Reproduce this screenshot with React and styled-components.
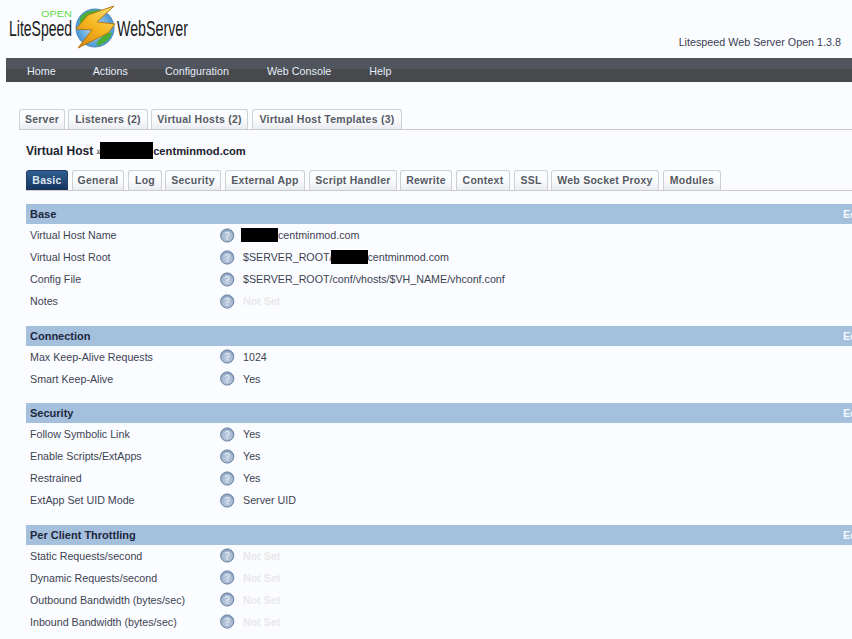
import React from 'react';
import styled, { createGlobalStyle } from 'styled-components';

const GlobalStyle = createGlobalStyle`
  html, body {
    margin: 0;
    padding: 0;
    height: 100%;
    overflow: hidden;
    background: #fbfcff;
  }
  body {
    font-family: "Liberation Sans", Arial, sans-serif;
    font-size: 10.75px;
    color: #333;
  }
`;

const Page = styled.div`
  width: 852px;
  height: 639px;
  overflow: hidden;
`;

const TopBar = styled.header`
  height: 58px;
  display: flex;
  justify-content: space-between;
  padding: 0 11px 0 6px;
`;

const Version = styled.div`
  margin-top: 36px;
  line-height: 13px;
  color: #3a4152;
`;

const Nav = styled.nav`
  margin-left: 6px;
  height: 24px;
  display: flex;
  background: linear-gradient(#50555e 0, #50555e 45%, #47494d 45%, #47494d 100%);
`;

const NavItem = styled.a`
  margin-left: ${(p) => p.$left}px;
  line-height: 26px;
  color: #e6eefa;
`;

const Tabs = styled.div`
  display: flex;
  height: 20px;
  border-bottom: 1px solid #cbcbcb;
  margin-left: ${(p) => p.$left}px;
`;

const Tab = styled.a`
  box-sizing: border-box;
  height: 20px;
  width: ${(p) => p.$w}px;
  margin-right: ${(p) => p.$gap}px;
  text-align: center;
  line-height: 18px;
  font-weight: bold;
  color: #555a63;
  letter-spacing: 0.25px;
  font-size: 10.5px;
  border: 1px solid #cfd0d2;
  border-bottom: none;
  border-radius: 3px 3px 0 0;
  background: linear-gradient(#fbfcfe 0, #fbfcfe 50%, #e9ebf2 100%);
  ${(p) =>
    p.$active &&
    `
    border-color: #1f3f68;
    color: #dfe8f4;
    background: linear-gradient(#2f5f92, #16345c);
  `}
`;

const MainTabs = styled(Tabs)`
  margin-top: 27px;
`;

const Title = styled.h1`
  margin: 12px 0 0 26px;
  height: 17px;
  font-size: 12px;
  line-height: 19px;
  font-weight: bold;
  color: #1d2330;
  display: flex;
  align-items: flex-start;
`;

const Arrow = styled.span`
  margin-left: 3px;
  width: 4px;
  font-size: 10px;
  font-weight: normal;
`;

const TitleHost = styled.span`
  font-size: 11.2px;
`;

const Redact = styled.span`
  display: inline-block;
  width: ${(p) => p.$w}px;
  height: ${(p) => p.$h}px;
  margin-left: ${(p) => p.$shift || 0}px;
  background: #000;
  flex: none;
`;

const SubTabs = styled(Tabs)`
  margin-top: 11px;
`;

const Sections = styled.div`
  margin: 13px 0 0 26px;
`;

const Section = styled.section`
  margin-bottom: 13.5px;
  &:last-child {
    margin-bottom: 0;
  }
`;

const SectionHead = styled.div`
  height: 20px;
  display: flex;
  justify-content: space-between;
  background: #a5c0dc;
  padding-left: 4px;
  line-height: 20px;
  font-weight: bold;
  font-size: 11px;
  color: #1c2740;
  overflow: hidden;
`;

const EditLink = styled.a`
  color: #f4f8ff;
  margin-right: -11px;
  width: 20px;
`;

const Row = styled.div`
  height: 22px;
  display: flex;
  align-items: center;
`;

const Label = styled.div`
  width: 194px;
  padding-left: 4px;
  box-sizing: border-box;
  color: #3c4352;
  font-size: 10.7px;
`;

const HelpWrap = styled.div`
  width: 23px;
  height: 15px;
  flex: none;
`;

const Value = styled.div`
  display: flex;
  align-items: center;
  color: ${(p) => (p.$empty ? '#e8e9ea' : '#3c4352')};
  font-weight: ${(p) => (p.$empty ? 'bold' : 'normal')};
  font-size: 10.7px;
  margin-left: ${(p) => (p.$flush ? -2 : 0)}px;
`;

function HelpIcon() {
  return (
    <svg width="15" height="15" viewBox="0 0 15 15">
      <defs>
        <radialGradient id="helpFill" cx="50%" cy="60%" r="55%">
          <stop offset="0" stopColor="#c4d2e3" />
          <stop offset="0.75" stopColor="#a3b7cf" />
          <stop offset="1" stopColor="#7f98b7" />
        </radialGradient>
      </defs>
      <circle cx="7.2" cy="7.5" r="6.6" fill="url(#helpFill)" stroke="#6a84a5" strokeWidth="1" />
      <path
        d="M5.3 6 C5.3 3.9 9.2 3.9 9.2 6 C9.2 7.4 7.2 7.3 7.2 9"
        fill="none"
        stroke="#e0e8f1"
        strokeWidth="1.2"
      />
      <circle cx="7.2" cy="10.9" r="0.8" fill="#e0e8f1" />
    </svg>
  );
}

function Logo() {
  return (
    <svg width="186" height="52" viewBox="0 0 186 52">
      <defs>
        <radialGradient id="globe" cx="50%" cy="50%" r="55%">
          <stop offset="0" stopColor="#bfe3f7" />
          <stop offset="1" stopColor="#3f8ed0" />
        </radialGradient>
        <linearGradient id="bolt" x1="0.8" y1="0" x2="0.2" y2="1">
          <stop offset="0" stopColor="#f8dc6a" />
          <stop offset="0.5" stopColor="#f5b51f" />
          <stop offset="1" stopColor="#d98a12" />
        </linearGradient>
      </defs>
      <text
        x="35"
        y="17"
        fontFamily="Liberation Sans"
        fontSize="9.5"
        fill="#5fdc48"
        textLength="31"
        lengthAdjust="spacingAndGlyphs"
      >
        OPEN
      </text>
      <text
        x="3"
        y="35.5"
        fontFamily="Liberation Sans"
        fontSize="22"
        fill="#1a1a1a"
        textLength="63"
        lengthAdjust="spacingAndGlyphs"
      >
        LiteSpeed
      </text>
      <text
        x="111"
        y="35.5"
        fontFamily="Liberation Sans"
        fontSize="22"
        fill="#1a1a1a"
        textLength="71"
        lengthAdjust="spacingAndGlyphs"
      >
        WebServer
      </text>
      <circle cx="89" cy="28" r="19" fill="url(#globe)" stroke="#4c88bd" strokeWidth="1" />
      <path d="M76 15 C82 10 92 9 98 12 C92 18 84 20 80 29 C74 28 71 22 76 15Z" fill="#4cae35" />
      <path d="M95 38 C99 33 104 32 106 33 C104 40 98 44 91 46 C90 43 92 40 95 38Z" fill="#4cae35" />
      <path
        d="M108 6 L82 15 L70 29 L86 30 L72 48 L102 33 L109 24 L91 22Z"
        fill="url(#bolt)"
        stroke="#b5780f"
        strokeWidth="1"
      />
    </svg>
  );
}

const sections = [
  {
    title: 'Base',
    rows: [
      ['Virtual Host Name', <><Redact $w={37} $h={14} />centminmod.com</>, false, true],
      ['Virtual Host Root', <>$SERVER_ROOT/<Redact $w={37} $h={14} $shift={-2} />centminmod.com</>],
      ['Config File', '$SERVER_ROOT/conf/vhosts/$VH_NAME/vhconf.conf'],
      ['Notes', 'Not Set', true],
    ],
  },
  {
    title: 'Connection',
    rows: [
      ['Max Keep-Alive Requests', '1024'],
      ['Smart Keep-Alive', 'Yes'],
    ],
  },
  {
    title: 'Security',
    rows: [
      ['Follow Symbolic Link', 'Yes'],
      ['Enable Scripts/ExtApps', 'Yes'],
      ['Restrained', 'Yes'],
      ['ExtApp Set UID Mode', 'Server UID'],
    ],
  },
  {
    title: 'Per Client Throttling',
    rows: [
      ['Static Requests/second', 'Not Set', true],
      ['Dynamic Requests/second', 'Not Set', true],
      ['Outbound Bandwidth (bytes/sec)', 'Not Set', true],
      ['Inbound Bandwidth (bytes/sec)', 'Not Set', true],
    ],
  },
];

const navItems = [
  ['Home', 21],
  ['Actions', 37],
  ['Configuration', 37],
  ['Web Console', 38],
  ['Help', 38],
];

const mainTabs = [
  ['Server', 46, 3],
  ['Listeners (2)', 80, 3],
  ['Virtual Hosts (2)', 97, 4],
  ['Virtual Host Templates (3)', 150, 0],
];

const subTabs = [
  ['Basic', 42, 4],
  ['General', 52, 4],
  ['Log', 34, 3],
  ['Security', 56, 4],
  ['External App', 80, 4],
  ['Script Handler', 88, 3],
  ['Rewrite', 52, 4],
  ['Context', 54, 4],
  ['SSL', 34, 3],
  ['Web Socket Proxy', 108, 4],
  ['Modules', 58, 0],
];

export default function App() {
  return (
    <Page>
      <GlobalStyle />
      <TopBar>
        <Logo />
        <Version>Litespeed Web Server Open 1.3.8</Version>
      </TopBar>
      <Nav>
        {navItems.map(([name, left]) => (
          <NavItem key={name} $left={left}>{name}</NavItem>
        ))}
      </Nav>
      <MainTabs $left={19}>
        {mainTabs.map(([name, w, gap]) => (
          <Tab key={name} $w={w} $gap={gap}>{name}</Tab>
        ))}
      </MainTabs>
      <Title>
        Virtual Host <Arrow>»</Arrow>
        <Redact $w={53} $h={17} />
        <TitleHost>centminmod.com</TitleHost>
      </Title>
      <SubTabs $left={26}>
        {subTabs.map(([name, w, gap], i) => (
          <Tab key={name} $w={w} $gap={gap} $active={i === 0}>{name}</Tab>
        ))}
      </SubTabs>
      <Sections>
        {sections.map((section) => (
          <Section key={section.title}>
            <SectionHead>
              {section.title}
              <EditLink>Edit</EditLink>
            </SectionHead>
            {section.rows.map(([label, value, empty, flush]) => (
              <Row key={label}>
                <Label>{label}</Label>
                <HelpWrap><HelpIcon /></HelpWrap>
                <Value $empty={empty} $flush={flush}>{value}</Value>
              </Row>
            ))}
          </Section>
        ))}
      </Sections>
    </Page>
  );
}
